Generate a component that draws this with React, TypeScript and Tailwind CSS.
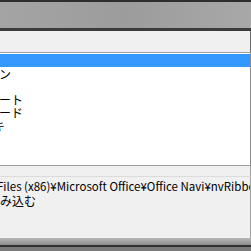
export default function App() {
  const rows = [
    { text: "ン", shift: "-ml-[1px]" },
    { text: "", shift: "" },
    { text: "ート", shift: "-ml-[1px]" },
    { text: "ード", shift: "-ml-[1px]" },
    { text: "キ", shift: "-ml-[7px]" },
    { text: "", shift: "" },
    { text: "", shift: "" },
  ];

  return (
    <div className="w-[251px] h-[251px] overflow-hidden flex flex-col bg-[#f0f0f0] font-['Noto_Sans_CJK_JP',sans-serif] text-[12px] text-black">
      {/* title bar strip */}
      <div className="h-[2px] bg-[#2e2e2e]" />
      <div className="h-[26px] bg-gradient-to-r from-[#a4a4a4] via-[#9c9c9c] to-[#a8a8a8]" />
      <div className="h-[3px] bg-[#3c3c3c]" />

      {/* dialog body */}
      <div className="h-[21px] bg-[#f0f0f0] border-r border-[#6a6a6a]" />

      {/* list */}
      <div className="h-[114px] flex flex-col bg-white border-t border-[#a0a0a0] border-b border-r border-r-[#8a8a8a] border-b-[#a0a0a0] pt-px overflow-hidden">
        <div className="h-[13px] shrink-0 bg-[#3399ff]" />
        {rows.map((r, i) => (
          <div key={i} className="h-[13px] shrink-0 overflow-hidden">
            <div className={`leading-[13px] whitespace-nowrap ${r.shift}`}>{r.text}</div>
          </div>
        ))}
      </div>

      <div className="h-[10px] border-r border-[#a0a0a0]" />
      <div className="flex-1 flex flex-col border-t border-[#dcdcdc] border-r border-r-[#a0a0a0] pt-[2px] overflow-hidden">
        <div className="h-[14px] leading-[14px] whitespace-nowrap -ml-[3px] text-[11.5px]">
          Files (x86)¥Microsoft Office¥Office Navi¥nvRibbo
        </div>
        <div className="h-[14px] leading-[14px] whitespace-nowrap mt-[1px]">み込む</div>
      </div>

      {/* bottom frame */}
      <div className="h-[7px] bg-gradient-to-b from-[#b8b8b8] to-[#8c8c8c]" />
      <div className="h-[2px] bg-[#303030]" />
      <div className="h-[4px] bg-[#7a7a7a]" />
    </div>
  );
}
